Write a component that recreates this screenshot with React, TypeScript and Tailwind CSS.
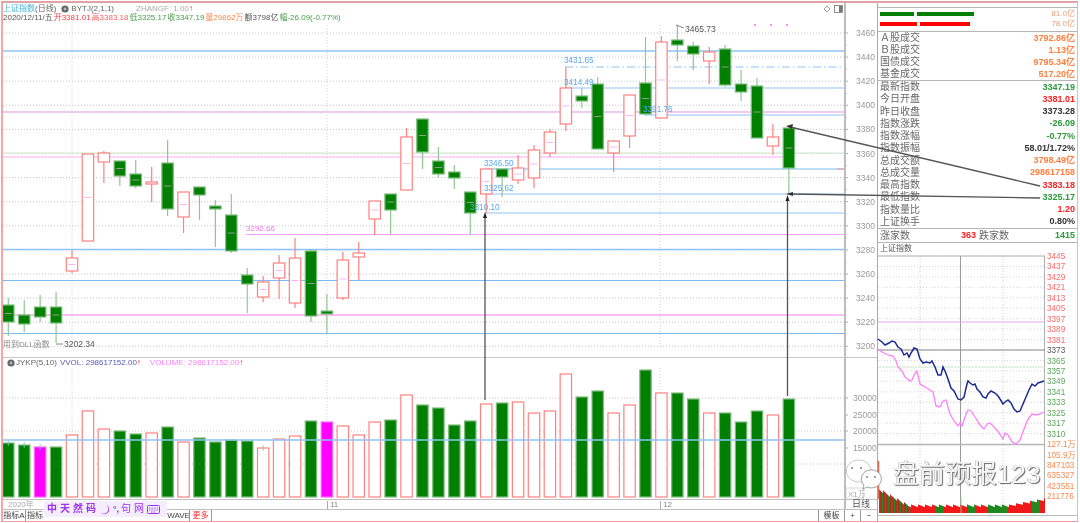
const GREEN = "#007f00";
const RED = "#ff8080";

// [isGreen, bodyTop, bodyBottom, wickTop, wickBottom]
const candles: [number, number, number, number, number][] = [
  [1, 305, 322, 298, 336], [1, 315, 324, 300, 332], [1, 307, 317, 295, 322], [1, 307, 323, 292, 343],
  [0, 258, 271, 250, 273], [0, 154, 241, 154, 241], [0, 153, 162, 151, 183], [1, 161, 176, 161, 186],
  [1, 174, 186, 160, 188], [0, 182, 184, 167, 202], [1, 163, 209, 140, 216], [0, 192, 217, 192, 233],
  [1, 187, 195, 187, 220], [1, 206, 209, 200, 247], [1, 215, 251, 194, 253], [1, 275, 284, 268, 313],
  [0, 282, 297, 276, 302], [0, 263, 278, 255, 299], [0, 258, 303, 238, 308], [1, 251, 316, 249, 322],
  [1, 311, 314, 294, 333], [0, 260, 298, 252, 300], [0, 253, 257, 242, 280], [0, 201, 219, 201, 235],
  [1, 194, 210, 194, 234], [0, 137, 190, 128, 190], [1, 119, 152, 119, 169], [1, 161, 174, 147, 178],
  [1, 172, 178, 165, 189], [1, 192, 213, 192, 235], [0, 169, 194, 169, 213], [1, 169, 177, 169, 197],
  [0, 168, 180, 155, 184], [0, 150, 178, 145, 188], [0, 132, 153, 129, 157], [0, 88, 124, 67, 131],
  [1, 96, 101, 88, 108], [1, 84, 149, 77, 149], [0, 141, 153, 140, 172], [0, 95, 136, 95, 148],
  [1, 83, 114, 37, 114], [0, 42, 118, 36, 118], [1, 40, 45, 25, 61], [1, 46, 54, 42, 70],
  [0, 52, 61, 47, 84], [1, 49, 85, 45, 87], [1, 84, 92, 70, 101], [1, 86, 138, 78, 138],
  [0, 137, 146, 124, 155], [1, 128, 168, 128, 194],
];

const volTops = [
  443, 445, 447, 447, 435, 411, 429, 431, 434, 433, 427, 442, 438, 442, 440, 441, 448, 439, 436, 421,
  422, 426, 435, 422, 420, 395, 405, 408, 425, 421, 404, 403, 402, 413, 411, 374, 397, 391, 413, 405,
  370, 393, 393, 399, 413, 413, 422, 411, 415, 399,
];

const cx = (i: number) => 8.3 + 15.93 * i;

const priceAxis = [3460, 3440, 3420, 3400, 3380, 3360, 3340, 3320, 3300, 3280, 3260, 3240, 3220, 3200];

// [y, x start, colour, width]
const levels: [number, number, string, number][] = [
  [51, 3, "#8fc4f5", 1.4], [88, 565, "#8fc4f5", 1.2], [115, 644, "#8fc4f5", 1.2], [112, 3, "#f0c8f0", 2],
  [153, 3, "#cfe6cf", 1], [169, 485, "#7db9f2", 1.2], [194, 485, "#8fc4f5", 1.2], [213, 485, "#8fc4f5", 1.2],
  [234.5, 246, "#ff9cff", 1.2], [249.5, 3, "#8fc4f5", 1.6], [280.5, 3, "#7db9f2", 1.1], [315, 3, "#ffa6f2", 1.7],
  [333.5, 3, "#7db9f2", 1.1],
];

const blueNotes: [number, number, string][] = [
  [564, 63, "3431.65"], [564, 85, "3414.49"], [643, 112, "3391.76"],
  [484, 166, "3346.50"], [484, 191, "3325.62"], [470, 210, "3310.10"],
];

const blueLine =
  "878,340 882,343 885,346 889,344 892,342 895,343 898,348 901,350 904,356 907,354 909,358 911,354 914,349 917,350 920,360 923,364 926,363 930,364 932,362 935,368 938,376 941,376 943,368 945,372 948,380 951,389 954,392 958,400 961,401 964,398 967,385 968,382 970,384 973,386 975,385 977,390 980,393 983,398 986,399 988,395 991,392 995,394 998,397 1000,400 1003,405 1005,403 1008,401 1011,404 1014,410 1017,413 1020,412 1023,405 1026,398 1029,391 1032,385 1035,387 1038,384 1041,383 1044,382";
const pinkLine =
  "878,350 882,353 888,356 893,357 896,362 898,368 902,372 905,378 910,382 912,381 914,376 917,372 920,385 925,388 930,391 933,393 936,407 940,408 943,402 946,401 950,415 954,422 958,427 960,424 962,427 965,418 968,411 971,412 975,418 980,426 984,430 987,425 990,424 995,429 999,434 1003,440 1005,434 1008,436 1012,443 1016,445 1020,441 1024,430 1028,420 1032,415 1036,416 1040,415 1044,413";

const minuteAxis: [string, string][] = [
  ["3445", "#ff6a6a"], ["3437", "#ff6a6a"], ["3429", "#ff6a6a"], ["3421", "#ff6a6a"], ["3413", "#ff6a6a"],
  ["3405", "#ff6a6a"], ["3397", "#ff6a6a"], ["3389", "#ff6a6a"], ["3381", "#ff6a6a"], ["3373", "#555555"],
  ["3365", "#5aa85a"], ["3357", "#5aa85a"], ["3349", "#5aa85a"], ["3341", "#5aa85a"], ["3333", "#5aa85a"],
  ["3325", "#5aa85a"], ["3317", "#5aa85a"], ["3310", "#5aa85a"], ["127.1万", "#ff8a50"], ["105.9万", "#ff8a50"],
  ["847103", "#ff8a50"], ["635327", "#ff8a50"], ["423551", "#ff8a50"], ["211776", "#ff8a50"],
];

const turnover = [
  ["Ａ股成交", "3792.86亿"], ["Ｂ股成交", "1.13亿"], ["国债成交", "9795.34亿"], ["基金成交", "517.20亿"],
];
const stats = [
  ["最新指数", "3347.19", "text-[#2a9a3a]"], ["今日开盘", "3381.01", "text-[#ff2020]"],
  ["昨日收盘", "3373.28", "text-[#333333]"], ["指数涨跌", "-26.09", "text-[#2a9a3a]"],
  ["指数涨幅", "-0.77%", "text-[#2a9a3a]"], ["指数振幅", "58.01/1.72%", "text-[#333333]"],
  ["总成交额", "3798.49亿", "text-[#ff7f40]"], ["总成交量", "298617158", "text-[#ff7f40]"],
  ["最高指数", "3383.18", "text-[#ff2020]"], ["最低指数", "3325.17", "text-[#2a9a3a]"],
  ["指数量比", "1.20", "text-[#ff2020]"], ["上证换手", "0.80%", "text-[#333333]"],
];

function Gear({ x = 0 }: { x?: number }) {
  return (
    <svg width="8" height="8" viewBox="0 0 8 8" style={{ marginLeft: x }} className="shrink-0">
      <circle cx="4" cy="4" r="3.6" fill="#666666" />
      <circle cx="4" cy="4" r="1.4" fill="#bbbbbb" />
    </svg>
  );
}

function PriceChart() {
  return (
    <svg width="874" height="335" viewBox="3 22 874 335" className="block">
      {priceAxis.map((v, i) => {
        const y = 33 + i * 24.1;
        return (
          <g key={v}>
            <line x1="3" x2="845" y1={y} y2={y} stroke="#c0c0c0" strokeWidth="0.9" strokeDasharray="1 2" />
            <line x1="845" x2="848" y1={y} y2={y} stroke="#aaaaaa" />
            <line x1="845" x2="847" y1={y + 12} y2={y + 12} stroke="#c4c4c4" />
            <text x="856" y={y + 3} fontSize="8.5" fill="#999999">{v}</text>
          </g>
        );
      })}
      {[72, 327, 660].map((x) => (
        <line key={x} x1={x} x2={x} y1="25" y2="348" stroke="#cccccc" strokeWidth="0.9" strokeDasharray="1 2" />
      ))}
      <line x1="565" x2="845" y1="67" y2="67" stroke="#8cc6f7" strokeWidth="1.2" strokeDasharray="8 3 1.5 3" />
      <line x1="3" x2="795" y1="157" y2="157" stroke="#ffaaf5" strokeWidth="1" />
      {levels.map(([y, x, c, w]) => (
        <line key={y} x1={x} x2="845" y1={y} y2={y} stroke={c} strokeWidth={w} />
      ))}
      {candles.map(([g, top, bottom, wt, wb], i) => {
        const c = cx(i);
        const mid = (top + bottom) / 2;
        return (
          <g key={i}>
            <line x1={c} x2={c} y1={wt} y2={wb} stroke={g ? "#8fc88f" : RED} strokeWidth="1.2" />
            <rect
              x={c - 5.7}
              y={top}
              width="11.4"
              height={bottom - top}
              fill={g ? GREEN : "#ffffff"}
              stroke={g ? "#7fbc7f" : RED}
              strokeWidth="1.2"
            />
            {bottom - top > 10 && (
              <line x1={c - 3.5} x2={c + 3.5} y1={mid} y2={mid} stroke={g ? "#8f9f8f" : "#ffb4f0"} strokeWidth="1" />
            )}
          </g>
        );
      })}
      <line x1="837" x2="845" y1="169" y2="169" stroke="#ff9090" />
      {[755, 771, 787].map((x) => (
        <rect key={x} x={x - 1} y="24" width="2" height="2" fill="#ff8cf0" />
      ))}
      {blueNotes.map(([x, y, t]) => (
        <text key={t} x={x} y={y} fontSize="8.2" fill="#5aa8f0">{t}</text>
      ))}
      <text x="246" y="231" fontSize="8" fill="#ff70f0">3292.66</text>
      <polyline points="676,25 684,28" fill="none" stroke="#666666" strokeWidth="0.8" />
      <text x="685" y="32" fontSize="8.5" fill="#555555">3465.73</text>
      <text x="3" y="347" fontSize="8" fill="#888888">用到DLL函数</text>
      <line x1="56" x2="63" y1="344" y2="344" stroke="#666666" strokeWidth="0.8" />
      <text x="64" y="347" fontSize="8.5" fill="#555555">3202.34</text>
      <line x1="845" x2="845" y1="22" y2="357" stroke="#bdbdbd" strokeWidth="2" />
    </svg>
  );
}

function VolumeChart() {
  return (
    <svg width="874" height="131" viewBox="3 368 874 131" className="block">
      {[398, 431, 464].map((y) => (
        <line key={y} x1="3" x2="845" y1={y} y2={y} stroke="#c4c4c4" strokeWidth="0.9" strokeDasharray="1 2" />
      ))}
      {[72, 327, 660].map((x) => (
        <line key={x} x1={x} x2={x} y1="368" y2="499" stroke="#cccccc" strokeWidth="0.9" strokeDasharray="1 2" />
      ))}
      {volTops.map((top, i) => {
        const up = candles[i][0] === 0;
        const hot = i === 2 || i === 20;
        return (
          <rect
            key={i}
            x={cx(i) - 5.7}
            y={top}
            width="11.4"
            height={497 - top}
            fill={hot ? "#ff00ff" : up ? "#ffffff" : GREEN}
            stroke={hot ? "#ff66ff" : up ? RED : "#7fbc7f"}
            strokeWidth="1.2"
          />
        );
      })}
      <line x1="3" x2="845" y1="440" y2="440" stroke="#8fc4f5" strokeWidth="1.3" />
      {[0, 1, 2, 16].map((i) => (
        <line key={i} x1={cx(i)} x2={cx(i)} y1={volTops[i] - 3} y2={volTops[i] + 3} stroke="#6fd0d0" strokeWidth="0.8" />
      ))}
      {[
        [30000, 398],
        [25000, 415],
        [20000, 431],
        [15000, 448],
      ].map(([v, y]) => (
        <g key={v}>
          <line x1="845" x2="848" y1={y} y2={y} stroke="#aaaaaa" />
          <text x="853" y={y + 3} fontSize="8.5" fill="#999999">{v}</text>
        </g>
      ))}
      <rect x="846" y="488" width="17" height="11" fill="#ffffff" stroke="#cccccc" strokeWidth="0.8" />
      <text x="848" y="497" fontSize="8" fill="#aaaaaa">X1万</text>
      <line x1="845" x2="845" y1="368" y2="499" stroke="#bdbdbd" strokeWidth="2" />
    </svg>
  );
}

function MinuteChart() {
  const bars = [];
  for (let x = 879; x < 1045; x++) {
    const t = x - 879;
    const h =
      (t < 30 ? 22 - t * 0.55 : 6) + (t > 130 ? (t - 130) * 0.18 : 0) + ((x * 13) % 7) * 0.4;
    // left end is a red/green mix, the middle mostly red with short green runs
    const green = t < 32 ? x % 3 === 0 : (x >> 3) % 4 === 1 || (t > 108 && t < 122 && x % 2 === 0);
    bars.push(
      <line key={x} x1={x + 0.5} x2={x + 0.5} y1={514} y2={514 - h} stroke={green ? "#1f8a1f" : t < 32 ? "#b03020" : "#f01818"} strokeWidth="1" />,
    );
  }
  return (
    <svg width="199" height="265" viewBox="878 256 199 265" className="block overflow-visible">
      {minuteAxis.map(([t, c], i) => {
        const y = 257 + i * 10.45;
        return (
          <g key={t}>
            {i < 18 && <line x1="878" x2="1045" y1={y} y2={y} stroke="#cfcfcf" strokeWidth="0.9" strokeDasharray="1 2" />}
            <text x="1047" y={y + 3} fontSize="8.2" fill={c}>{t}</text>
          </g>
        );
      })}
      {[920, 1003].map((x) => (
        <line key={x} x1={x} x2={x} y1="257" y2="514" stroke="#c8c8c8" strokeWidth="0.9" strokeDasharray="1 2" />
      ))}
      <line x1="960.5" x2="960.5" y1="257" y2="514" stroke="#9a9a9a" />
      <line x1="878" x2="1045" y1="257" y2="257" stroke="#b0b0b0" />
      <line x1="1044.5" x2="1044.5" y1="257" y2="514" stroke="#b0b0b0" />
      <line x1="878" x2="1045" y1="351" y2="351" stroke="#8a8a8a" />
      <line x1="878" x2="1045" y1="323" y2="323" stroke="#e5a5f0" />
      <line x1="878" x2="1045" y1="368" y2="368" stroke="#cfe6cf" />
      <line x1="878" x2="1045" y1="445.5" y2="445.5" stroke="#b5b5b5" strokeWidth="1.6" />
      <polyline points={pinkLine} fill="none" stroke="#ff80ff" strokeWidth="1.3" />
      <polyline points={blueLine} fill="none" stroke="#1c2a90" strokeWidth="1.5" />
      {bars}
      <line x1="961" x2="961" y1="499" y2="514" stroke="#8fc48f" />
      <line x1="878.5" x2="878.5" y1="462" y2="500" stroke="#d86a50" strokeWidth="1.5" />
      <line x1="878" x2="1077" y1="516.5" y2="516.5" stroke="#bbbbbb" />
    </svg>
  );
}

function SidePanel() {
  return (
    <div className="flex w-[200px] shrink-0 flex-col border-l border-[#aaaaaa]">
      <div className="h-[4px]" />
      <div className="flex h-[25px] flex-col border-y border-[#b5b5b5] py-px pl-[2px] pr-[2px] text-[8px] leading-[10px] text-[#f0a080]">
        <div className="flex h-[10px] items-center gap-[3px]">
          <div className="h-[4px] w-[34px] bg-[#007f00]" />
          <div className="h-[4px] w-[57px] bg-[#007f00]" />
          <span className="ml-auto">81.0亿</span>
        </div>
        <div className="flex h-[10px] items-center gap-[3px]">
          <div className="h-[4px] w-[37px] bg-[#ff0000]" />
          <div className="h-[4px] w-[50px] bg-[#ff0000]" />
          <span className="ml-auto">78.0亿</span>
        </div>
      </div>
      <div className="flex flex-col border-b border-[#b5b5b5] px-[2px]">
        {turnover.map(([label, value]) => (
          <div key={label} className="flex h-[12px] items-center justify-between leading-none">
            <span className="text-[10px] text-[#666666]">{label}</span>
            <span className="text-[9px] font-bold text-[#ff7f40]">{value}</span>
          </div>
        ))}
      </div>
      <div className="flex flex-col border-b border-[#b5b5b5] px-[2px]">
        {stats.map(([label, value, color]) => (
          <div key={label} className="flex h-[12.25px] items-center justify-between leading-none">
            <span className="text-[10px] text-[#666666]">{label}</span>
            <span className={`text-[9px] font-bold ${color}`}>{value}</span>
          </div>
        ))}
      </div>
      <div className="flex h-[14px] items-center border-b border-[#b5b5b5] px-[2px] leading-none">
        <span className="w-[81px] text-[10px] text-[#666666]">涨家数</span>
        <span className="w-[18px] text-[9px] font-bold text-[#ff2020]">363</span>
        <span className="text-[10px] text-[#666666]">跌家数</span>
        <span className="ml-auto text-[9px] font-bold text-[#2a9a3a]">1415</span>
      </div>
      <div className="flex h-[12px] items-center px-[2px] text-[8px] leading-none text-[#555555]">上证指数</div>
      <MinuteChart />
    </div>
  );
}

export default function App() {
  return (
    <div className="relative h-[523px] w-[1080px] overflow-hidden bg-white pb-px pl-px pr-[2px] pt-px font-['Liberation_Sans','Noto_Sans_CJK_SC',sans-serif] blur-[0.5px]">
      <div className="flex h-full border-b border-l-2 border-r border-t-2 border-b-[#f0a0a0] border-l-[#f6a6a6] border-r-[#f6b0b0] border-t-[#dfa3a3]">
        <div className="flex w-[874px] shrink-0 flex-col">
          <div className="flex h-[19px] w-[843px] flex-col border-r-2 border-[#bdbdbd] text-[8px] leading-[9px]">
            <div className="mt-px flex h-[9px] items-center whitespace-nowrap">
              <span className="text-[#45b8d8]">上证指数</span>
              <span className="text-[#666666]">(日线)</span>
              <Gear x={5} />
              <span className="ml-[2px] text-[#666666]">BYTJ(2,1,1)</span>
              <span className="ml-[22px] text-[#aaaaaa]">ZHANGF: 1.00</span>
              <span className="text-[#ff3030]">↑</span>
              <svg width="8" height="8" viewBox="0 0 8 8" className="ml-auto">
                <path d="M4 1 7 4 4 7 1 4Z" fill="none" stroke="#888888" strokeWidth="0.8" />
              </svg>
              <svg width="9" height="8" viewBox="0 0 9 8" className="ml-[3px] mr-[1px]">
                <rect x="0.5" y="0.5" width="8" height="7" fill="#ffffff" stroke="#777777" strokeWidth="0.8" />
                <rect x="5" y="1" width="3" height="6" fill="#777777" />
              </svg>
            </div>
            <div className="flex h-[9px] items-center whitespace-nowrap">
              <span className="text-[#555555]">2020/12/11/五</span>
              <span className="ml-px text-[#ff4040]">开3381.01</span>
              <span className="ml-px text-[#ff6060]">高3383.18</span>
              <span className="ml-px text-[#4aa04a]">低3325.17</span>
              <span className="ml-px text-[#4aa04a]">收3347.19</span>
              <span className="ml-px text-[#ff8a50]">量29862万</span>
              <span className="ml-px text-[#555555]">额3798亿</span>
              <span className="ml-px text-[#4aa04a]">幅-26.09(-0.77%)</span>
            </div>
          </div>
          <div className="border-b border-[#c8c8c8]">
            <PriceChart />
          </div>
          <div className="flex h-[10px] w-[843px] items-center border-r-2 border-[#bdbdbd] pl-[4px] text-[8px] leading-none">
            <Gear />
            <span className="ml-px text-[#666666]">JYKP(5,10)</span>
            <span className="ml-[3px] text-[#5a5ab8]">VVOL: 298617152.00</span>
            <span className="text-[#ff3030]">↑</span>
            <span className="ml-[9px] text-[#ff80ff]">VOLUME: 298617152.00</span>
            <span className="text-[#ff3030]">↑</span>
          </div>
          <VolumeChart />
          <div className="flex h-[10px] items-center border-t border-[#c0c0c0] text-[8px] leading-none text-[#aaaaaa]">
            <div className="relative h-full w-[843px] border-r-2 border-[#bdbdbd]">
              <span className="absolute left-[5px] top-px">2020年</span>
              <span className="absolute left-[324px] top-px border-l border-[#aaaaaa] pl-[2px] text-[#888888]">11</span>
              <span className="absolute left-[657px] top-px border-l border-[#aaaaaa] pl-[2px] text-[#888888]">12</span>
            </div>
            <span className="ml-[6px] text-[9px] text-[#555555]">日线</span>
          </div>
          <div className="flex h-[12px] items-center whitespace-nowrap border-t border-[#c0c0c0] text-[8px] leading-none text-[#444444]">
            <span className="flex h-full w-[23px] items-center justify-center border-r border-[#999999]">指标A</span>
            <span className="w-[18px] overflow-hidden pl-px leading-[11px]">指标</span>
            <span className="ml-[124px] flex h-full w-[22px] items-center justify-center border-r border-[#999999]">WAVE</span>
            <span className="flex h-full w-[22px] items-center justify-center border-r border-[#999999] text-[#ff3030]">更多</span>
            <span className="ml-auto flex h-full w-[27px] items-center justify-center border-x border-[#999999]">模板</span>
            <span className="flex h-full w-[16px] items-center justify-center border-r border-[#999999]">+</span>
            <span className="flex h-full w-[16px] items-center justify-center">−</span>
          </div>
        </div>
        <SidePanel />
      </div>

      <div className="absolute left-[44px] top-[501px] flex h-[16px] w-[123px] items-center bg-[#f3edfc] pl-[3px] text-[10px] font-bold leading-none text-[#a030f0]">
        <span className="tracking-[3px]">中天然码</span>
        <svg width="10" height="11" viewBox="0 0 10 11" className="ml-[1px]">
          <path d="M6 0.5A5 5 0 1 1 1 9 4.5 4.5 0 0 0 6 0.5Z" fill="#a030f0" />
        </svg>
        <span className="ml-[3px] text-[9px]">°,</span>
        <span className="ml-[2px] font-normal tracking-[3px]">句网</span>
        <svg width="13" height="9" viewBox="0 0 13 9">
          <rect x="0.5" y="0.5" width="12" height="8" rx="1" fill="none" stroke="#a030f0" />
          <path d="M2 3h9M2 5h9M4 7h5" stroke="#a030f0" strokeWidth="0.8" strokeDasharray="1 0.6" />
        </svg>
      </div>

      <span className="absolute left-[893px] top-[456px] whitespace-nowrap text-[26px] leading-[36px] text-[#f6f6f6] [text-shadow:1px_1px_1px_#666666,-0.5px_-0.5px_0.5px_#aaaaaa]">
        盘前预报123
      </span>

      <svg width="1080" height="523" viewBox="0 0 1080 523" className="pointer-events-none absolute left-0 top-0">
        <line x1="1040" y1="186" x2="790" y2="127" stroke="#555555" strokeWidth="1.3" />
        <polygon points="786,126 793,124 792,129" fill="#333333" />
        <line x1="1040" y1="198" x2="790" y2="194" stroke="#555555" strokeWidth="1.3" />
        <polygon points="786,194 793,192 793,196" fill="#333333" />
        <line x1="485" y1="400" x2="485" y2="216" stroke="#555555" strokeWidth="1.3" />
        <polygon points="485,212 483,218 487,218" fill="#222222" />
        <line x1="787.5" y1="396" x2="787.5" y2="199" stroke="#555555" strokeWidth="1.3" />
        <polygon points="787.5,195 785.5,201 789.5,201" fill="#222222" />
        <path d="M857 460a13 11 0 0 1 10 19l1 5-6-2a13 11 0 1 1-5-22Z" fill="#ffffff" stroke="#bbbbbb" strokeWidth="0.8" />
        <path d="M870 470a10 9 0 1 1-3 17l-4 2 1-4a10 9 0 0 1 6-15Z" fill="#ffffff" stroke="#888888" strokeWidth="0.8" />
        <circle cx="852" cy="468" r="1" fill="#777777" />
        <circle cx="861" cy="468" r="1" fill="#777777" />
        <circle cx="867" cy="477" r="0.9" fill="#777777" />
        <circle cx="875" cy="477" r="0.9" fill="#777777" />
      </svg>
    </div>
  );
}
